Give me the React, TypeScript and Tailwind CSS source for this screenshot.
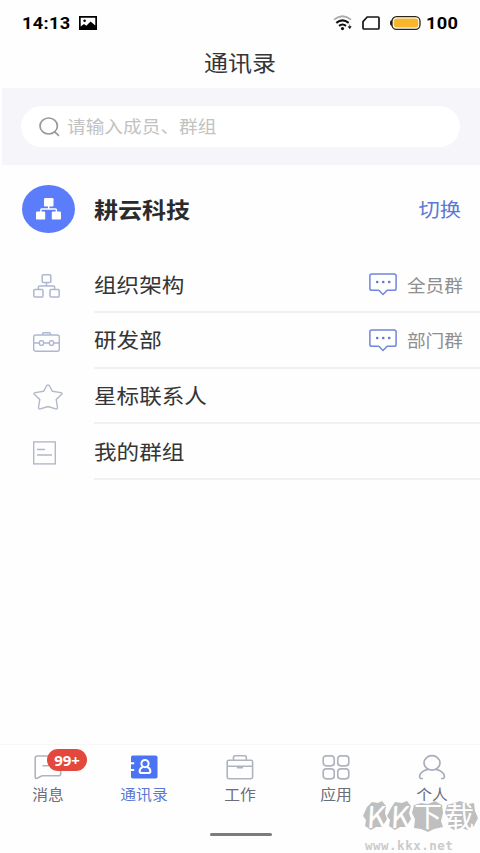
import type { ReactNode } from "react";

function StatusBar() {
  return (
    <div className="flex h-[45px] items-center justify-between pl-[22px] pr-[22px] pt-px text-black">
      <div className="flex items-center gap-[9px]">
        <span className="w-[48px] origin-left scale-x-[1.07] whitespace-nowrap font-['Roboto'] text-[17px] font-bold leading-none tracking-[0.3px]">
          14:13
        </span>
        <svg width="18" height="14" viewBox="0 0 18 14">
          <path fillRule="evenodd" d="M0 0H18V14H0ZM1.7 1.7V10.5L5 8L7.3 9.8L11.6 5.6L16.3 9.5V1.7Z" />
          <circle cx="5.6" cy="4.7" r="1.3" />
        </svg>
      </div>
      <div className="flex items-center">
        <svg width="20" height="16" viewBox="0 0 20 16" fill="none">
          <path d="M1 4.6Q9.5 -2 18 4.6" stroke="#aaa" strokeWidth="1.8" />
          <path d="M3.3 7.8Q9.5 3 15.7 7.8" stroke="#111" strokeWidth="2.1" />
          <path d="M6 10.8Q9.5 8.2 13 10.8" stroke="#111" strokeWidth="2.1" />
          <circle cx="9.5" cy="13.6" r="1.6" fill="#111" />
          <path d="M16.7 9.5V11.5M15.2 11.6H18.2L16.7 13.8Z" fill="#111" stroke="#111" strokeWidth="0.6" />
        </svg>
        <svg className="ml-[9px]" width="18" height="14" viewBox="0 0 18 14" fill="none">
          <path d="M5.2 1H16Q17 1 17 2V12Q17 13 16 13H2Q1 13 1 12V5.6Z" stroke="#161616" strokeWidth="1.7" />
        </svg>
        <svg className="ml-[10px]" width="31" height="14" viewBox="0 0 31 14">
          <path d="M2.5 4.3H1.4Q0 4.3 0 7T1.4 9.7H2.5Z" fill="#111" />
          <rect x="2" y="0.7" width="28" height="12.6" rx="4.6" fill="#fff" stroke="#2a2418" strokeWidth="1.3" />
          <rect x="3.8" y="2.4" width="24.5" height="9.2" rx="3" fill="#f8b62b" />
        </svg>
        <span className="ml-[5px] w-[32px] origin-left scale-x-[1.07] whitespace-nowrap font-['Roboto'] text-[17px] font-bold leading-none tracking-[0.3px]">
          100
        </span>
      </div>
    </div>
  );
}

function OrgIcon() {
  return (
    <svg width="27" height="24" viewBox="0 0 27 24" fill="none" stroke="#aeb7cf" strokeWidth="1.5">
      <rect x="9.2" y="0.8" width="8.6" height="7.6" rx="1" />
      <rect x="0.8" y="15.4" width="9.2" height="7.6" rx="1" />
      <rect x="17" y="15.4" width="9.2" height="7.6" rx="1" />
      <path d="M13.5 8.4V12M5.4 15.4V13Q5.4 12 6.4 12H20.6Q21.6 12 21.6 13V15.4" />
    </svg>
  );
}

function ToolboxIcon() {
  return (
    <svg width="27" height="20" viewBox="0 0 27 20" fill="none" stroke="#aeb7cf" strokeWidth="1.4">
      <rect x="0.7" y="3" width="25.6" height="16.2" rx="2" />
      <path d="M9.5 3V1.7Q9.5 0.8 10.5 0.8H16.5Q17.5 0.8 17.5 1.7V3M0.7 11H6.3M10.7 11H16.3M20.7 11H26.3" />
      <rect x="6.5" y="8.7" width="4" height="4.6" rx="1.3" />
      <rect x="16.5" y="8.7" width="4" height="4.6" rx="1.3" />
    </svg>
  );
}

function StarIcon() {
  return (
    <svg width="30" height="26" viewBox="0 0 30 26" fill="none" stroke="#b2b8c7" strokeWidth="1.4" strokeLinejoin="round">
      <path d="M13.8 1.5Q15 0.2 16.2 1.5L19.5 7.3L27.8 8.6Q29.9 9.2 28.4 10.6L23.2 15.4L24.5 23.5Q24.5 25.4 22.6 24.9L15 22.5L7.4 24.9Q5.5 25.4 5.5 23.5L6.8 15.4L1.6 10.6Q0.1 9.2 2.2 8.6L10.5 7.3Z" />
    </svg>
  );
}

function GroupIcon() {
  return (
    <svg width="23" height="24" viewBox="0 0 23 24" fill="none" stroke="#b2b8c7" strokeWidth="1.4">
      <rect x="0.7" y="0.9" width="21.6" height="22" />
      <path d="M4 8.5H12M4 14H19" />
    </svg>
  );
}

function ChatIcon() {
  return (
    <svg width="28" height="23" viewBox="0 0 28 23" fill="none">
      <path
        d="M3 0.9H25Q27.1 0.9 27.1 2.8V15.4Q27.1 17.3 25 17.3H18.2L14 21.5L9.8 17.3H3Q0.9 17.3 0.9 15.4V2.8Q0.9 0.9 3 0.9Z"
        stroke="#6f87dc"
        strokeWidth="1.5"
      />
      <g fill="#6178c9">
        <circle cx="8.2" cy="9" r="1.3" />
        <circle cx="14.2" cy="9" r="1.3" />
        <circle cx="20.2" cy="9" r="1.3" />
      </g>
    </svg>
  );
}

const rows: { label: string; icon: ReactNode; group?: string }[] = [
  { label: "组织架构", icon: <OrgIcon />, group: "全员群" },
  { label: "研发部", icon: <ToolboxIcon />, group: "部门群" },
  { label: "星标联系人", icon: <StarIcon /> },
  { label: "我的群组", icon: <GroupIcon /> },
];

const tabs: { label: string; icon: ReactNode; active?: boolean; badge?: string }[] = [
  {
    label: "消息",
    badge: "99+",
    icon: (
      <svg width="28" height="26" viewBox="0 0 28 26" fill="none" stroke="#b0b4c0" strokeWidth="1.6">
        <path d="M3.5 2H24.5Q26.7 2 26.7 4V19.8Q26.7 21.8 24.5 21.8H8L3.2 24.2Q1.2 25 1.2 22.8V4Q1.2 2 3.5 2ZM8.5 11.7H15" />
      </svg>
    ),
  },
  {
    label: "通讯录",
    active: true,
    icon: (
      <svg width="28" height="26" viewBox="0 0 28 26" fill="none">
        <rect x="1" y="1.5" width="26.5" height="23" rx="1.8" fill="#4c73f4" />
        <path d="M0 9.2H4.2M0 16H4.2" stroke="#fff" strokeWidth="2" />
        <circle cx="15" cy="9.6" r="3.6" stroke="#fff" strokeWidth="2" />
        <path d="M12.8 12.8Q9.6 14.5 9.6 17.2Q9.6 19 11.6 19H18.4Q20.4 19 20.4 17.2Q20.4 14.5 17.2 12.8" stroke="#fff" strokeWidth="2" />
      </svg>
    ),
  },
  {
    label: "工作",
    icon: (
      <svg width="28" height="26" viewBox="0 0 28 26" fill="none" stroke="#b0b4c0" strokeWidth="1.6">
        <rect x="1.2" y="6.3" width="25.4" height="18.4" rx="1.6" />
        <path d="M7.5 6.3V3Q7.5 1.8 8.8 1.8H19Q20.3 1.8 20.3 3V6.3M1.2 12.2H26.6M11.7 12.4V13.7H16.2V12.4" />
      </svg>
    ),
  },
  {
    label: "应用",
    icon: (
      <svg width="28" height="26" viewBox="0 0 28 26" fill="none" stroke="#b0b4c0" strokeWidth="1.7">
        <rect x="1.2" y="1.8" width="11" height="10" rx="3" />
        <rect x="15.8" y="1.8" width="11" height="10" rx="3" />
        <rect x="1.2" y="14.8" width="11" height="10" rx="3" />
        <rect x="15.8" y="14.8" width="11" height="10" rx="3" />
      </svg>
    ),
  },
  {
    label: "个人",
    icon: (
      <svg width="28" height="26" viewBox="0 0 28 26" fill="none" stroke="#a9adbb" strokeWidth="1.7" strokeLinecap="round">
        <ellipse cx="14" cy="8.9" rx="8" ry="7.2" />
        <path d="M10 15.4C4.5 16.5 1.5 19.8 1.5 22.5Q1.5 24.7 4.2 24.5M18 15.4C23.5 16.5 26.5 19.8 26.5 22.5Q26.5 24.7 23.8 24.5" />
      </svg>
    ),
  },
];

function Watermark() {
  return (
    <div className="absolute left-[363px] top-[801px] h-[52px] w-[117px]">
      <svg className="absolute left-0 top-0" width="117" height="32" viewBox="0 0 117 32" fill="#bfbfbf">
        <path d="M4 6L9 1L15 2L19 0L23 5L22 12L24 18L19 26L13 26L8 29L2 25L3 19L0 15Z" />
        <path d="M28 7L32 1L39 2L44 0L48 5L46 12L48 18L43 26L37 26L32 29L26 25L27 19L24 15Z" />
        <path d="M51 4L58 2L65 3L72 0L79 4L80 12L78 20L80 26L71 28L65 31L58 28L51 27L52 18L49 12Z" />
        <path d="M84 4L91 2L97 0L105 3L111 2L112 10L115 17L111 25L105 29L98 27L91 29L85 25L86 18L82 12Z" />
      </svg>
      <div className="absolute left-[4px] top-0 flex h-[28px] items-center font-['Noto_Sans_CJK_SC',sans-serif] font-normal leading-[28px] text-white">
        <span className="w-[24px] -skew-x-3 text-[30px]">K</span>
        <span className="w-[23px] -skew-x-3 text-[30px]">K</span>
        <span className="w-[31px] text-[28px]">下</span>
        <span className="text-[29px]">载</span>
      </div>
      <span className="absolute left-[2px] top-[37px] whitespace-nowrap font-['DejaVu_Sans_Mono',monospace] text-[12.5px] font-bold leading-[16px] tracking-[0.5px] text-[#cbcbcb]">
        www.kkx.net
      </span>
    </div>
  );
}

export default function App() {
  return (
    <div className="relative flex h-[853px] w-[480px] flex-col overflow-hidden bg-[#fefefe] font-['Noto_Sans_CJK_SC',sans-serif] text-[#353535]">
      <StatusBar />

      <header className="flex h-[43px] items-center justify-center pb-[9px]">
        <h1 className="scale-y-[0.9] text-[24px] leading-none">通讯录</h1>
      </header>

      {/* Search */}
      <div className="ml-[2px] h-[77px] bg-[#f5f5fa] pl-[19px] pr-[20px] pt-[18px]">
        <div className="flex h-[41px] items-center rounded-full bg-white pl-[18px]">
          <svg width="21" height="20" viewBox="0 0 21 20" fill="none" stroke="#999" strokeWidth="1.7">
            <ellipse cx="9.7" cy="9" rx="8.7" ry="8" />
            <path d="M15.5 14.6L20 18.8" />
          </svg>
          <span className="ml-[7px] scale-y-[0.92] text-[18.7px] leading-none text-[#c2c2c2]">请输入成员、群组</span>
        </div>
      </div>

      {/* Company */}
      <div className="flex h-[91px] items-center pb-[3px] pl-[22px] pr-[19px]">
        <div className="flex h-[48px] w-[53px] items-center justify-center rounded-[50%] bg-[#5b7dfb]">
          <svg width="25" height="22" viewBox="0 0 25 22" fill="#fff">
            <rect x="8" y="0" width="9.5" height="8.4" rx="1.2" />
            <rect x="0" y="13.6" width="9.2" height="8" rx="1.2" />
            <rect x="15.8" y="13.6" width="9.2" height="8" rx="1.2" />
            <path d="M12.7 8V11M4.8 14V12Q4.8 11 5.8 11H19.4Q20.4 11 20.4 12V14" fill="none" stroke="#fff" strokeWidth="1.4" />
          </svg>
        </div>
        <span className="ml-[19px] scale-y-[0.91] text-[24px] font-bold leading-none text-[#2b2b2b]">耕云科技</span>
        <span className="ml-auto scale-y-[0.9] text-[21.3px] leading-none text-[#5b78d6]">切换</span>
      </div>

      {/* Entries */}
      <div className="flex flex-col pt-px">
        {rows.map((row) => (
          <div key={row.label} className="flex h-[55.8px]">
            <div className="flex w-[94px] items-center pl-[33px] pt-[2px]">{row.icon}</div>
            <div className="flex flex-1 items-center border-b-2 border-[#f1f1f1] pr-[17px] pt-[2px]">
              <span className="scale-y-[0.92] text-[22.6px] leading-none">{row.label}</span>
              {row.group && (
                <div className="ml-auto flex items-center gap-[10px]">
                  <ChatIcon />
                  <span className="scale-y-[0.92] text-[18.7px] leading-none text-[#8f8f8f]">{row.group}</span>
                </div>
              )}
            </div>
          </div>
        ))}
      </div>

      {/* Tab bar */}
      <nav className="mt-auto flex h-[109px] border-t border-[#f7f7f7]">
        {tabs.map((tab) => (
          <div key={tab.label} className="relative flex w-[96px] flex-col items-center pt-[9px]">
            {tab.icon}
            {tab.badge && (
              <span className="absolute left-[47px] top-[4px] flex h-[22px] w-[40px] items-center justify-center rounded-full bg-[#e4483c] font-['Noto_Sans'] text-[15px] font-bold leading-none text-white">
                {tab.badge}
              </span>
            )}
            <span
              className={`mt-[6px] scale-y-[0.93] text-[15.8px] leading-[16px] ${
                tab.active ? "text-[#5b78d6]" : "text-[#6a6d7a]"
              }`}
            >
              {tab.label}
            </span>
          </div>
        ))}
      </nav>
      <div className="absolute bottom-[17px] left-[210px] h-[3px] w-[62px] rounded-full bg-[#7c7c7c]" />

      <Watermark />
    </div>
  );
}
